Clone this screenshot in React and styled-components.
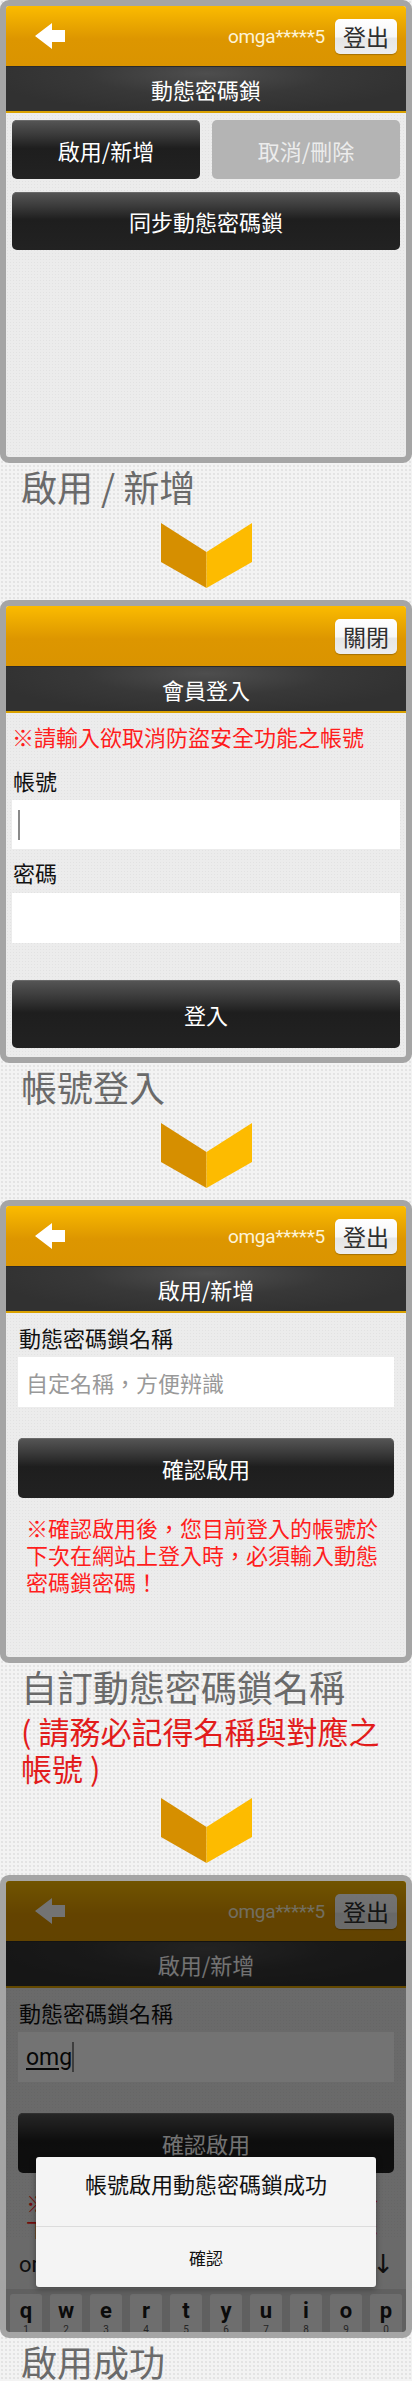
import React from "react";
import styled, { createGlobalStyle, css } from "styled-components";

const GlobalStyle = createGlobalStyle`
  body {
    margin: 0;
    background-color: #f3f3f3;
    background-image: radial-gradient(#e3e3e3 0.7px, transparent 1px);
    background-size: 4px 4px;
    font-family: "Noto Sans CJK TC", "Noto Sans", sans-serif;
  }
`;

const Page = styled.div`
  width: 412px;
  display: flex;
  flex-direction: column;
`;

const Frame = styled.section`
  position: relative;
  height: 463px;
  box-sizing: border-box;
  border: 6px solid #a5a5a5;
  border-radius: 9px;
  overflow: hidden;
  display: flex;
  flex-direction: column;
  background-color: #ececec;
  background-image: radial-gradient(#e2e2e2 0.6px, transparent 0.9px);
  background-size: 3px 3px;
`;

const TopBar = styled.header`
  height: 60px;
  flex-shrink: 0;
  display: flex;
  align-items: center;
  padding: 0 9px 0 29px;
  background: linear-gradient(#fbbb00 0%, #eaa700 30%, #dd9600 55%, #da9400 100%);
`;

const User = styled.span`
  margin-left: auto;
  margin-right: 10px;
  font-family: Roboto, "Noto Sans", sans-serif;
  font-size: 19px;
  letter-spacing: -0.3px;
  color: #fdf3d6;
`;

const HeadButton = styled.div`
  width: 62px;
  height: 35px;
  border-radius: 5px;
  display: flex;
  align-items: center;
  justify-content: center;
  font-size: 23px;
  color: #2f2f2f;
  background: linear-gradient(#ffffff 0%, #f7f7f7 50%, #e6e6e6 56%, #ededed 100%);
  box-shadow: 0 1px 1px rgba(0, 0, 0, 0.25);
  ${({ $push }) => $push && css`margin-left: auto;`}
`;

const TitleBar = styled.div`
  height: 44px;
  flex-shrink: 0;
  display: flex;
  align-items: center;
  justify-content: center;
  border-top: 1px solid #2a2a2a;
  border-bottom: 2px solid #d9a100;
  box-sizing: content-box;
  color: #fff;
  font-size: 22px;
  background: radial-gradient(ellipse 55% 90% at 50% 15%, #4e4e4e 0%, #383838 55%, #313131 100%);
`;

const MenuGrid = styled.div`
  display: grid;
  grid-template-columns: 1fr 1fr;
  column-gap: 12px;
  row-gap: 13px;
  padding: 7px 6px 0;
`;

const Button = styled.div`
  height: ${({ $h }) => $h}px;
  margin-top: ${({ $mt }) => $mt || 0}px;
  border-radius: 5px;
  display: flex;
  align-items: center;
  justify-content: center;
  font-size: 22px;
  grid-column: ${({ $wide }) => ($wide ? "1 / span 2" : "auto")};
  ${({ $muted }) =>
    $muted
      ? css`
          background: #b4b4b4;
          color: #ececec;
        `
      : css`
          color: #fff;
          background: linear-gradient(#565656 0%, #3a3a3a 25%, #1e1e1e 48%, #222 100%);
          box-shadow: inset 0 1px 0 #6a6a6a;
        `}
`;

const FormBody = styled.div`
  display: flex;
  flex-direction: column;
  padding: ${({ $pad }) => $pad};
`;

const Warning = styled.div`
  color: #ff1d1d;
  font-size: 22px;
  line-height: ${({ $lh }) => $lh || 30}px;
  margin-top: ${({ $mt }) => $mt || 0}px;
  padding-left: ${({ $pl }) => $pl || 0}px;
`;

const Label = styled.div`
  font-size: 22px;
  line-height: 30px;
  color: #111;
  margin-top: ${({ $mt }) => $mt || 0}px;
  margin-bottom: ${({ $mb }) => $mb || 5}px;
  padding-left: 1px;
`;

const Field = styled.div`
  height: ${({ $h }) => $h}px;
  background: #fff;
  display: flex;
  align-items: center;
  padding-left: 8px;
  font-size: 22px;
  color: #999;
`;

const Caret = styled.span`
  display: inline-block;
  width: 1.5px;
  height: 30px;
  background: #8a8a8a;
  margin-left: ${({ $ml }) => $ml || 0}px;
`;

const Typed = styled.span`
  font-family: Roboto, "Noto Sans", sans-serif;
  font-size: 23px;
  color: #111;
  text-decoration: underline;
  text-underline-offset: 3px;
`;

const Dim = styled.div`
  position: absolute;
  inset: 0;
  background: rgba(0, 0, 0, 0.55);
`;

const Keyboard = styled.div`
  position: absolute;
  left: 0;
  right: 0;
  bottom: 0;
  display: flex;
  flex-direction: column;
`;

const Suggest = styled.div`
  height: 50px;
  display: flex;
  align-items: center;
  justify-content: space-between;
  padding: 0 12px 0 13px;
  background: #eaeaea;
  font-family: Roboto, "Noto Sans", sans-serif;
  font-size: 22px;
  color: #222;
`;

const DownMark = styled.span`
  font-family: "DejaVu Sans", sans-serif;
  font-size: 26px;
  color: #222;
`;

const KeyRow = styled.div`
  height: 43px;
  display: flex;
  gap: 8px;
  padding: 5px 0 0 4px;
  box-sizing: border-box;
  background: #d6d6d6;
`;

const Key = styled.div`
  width: 32px;
  height: 48px;
  flex-shrink: 0;
  border-radius: 3px;
  background: #f4f4f4;
  display: flex;
  flex-direction: column;
  align-items: center;
  padding-top: 4px;
  box-sizing: border-box;
  font-family: Roboto, "Noto Sans", sans-serif;
  font-weight: 700;
  font-size: 22px;
  line-height: 26px;
  color: #1a1a1a;
  small {
    font-size: 10px;
    line-height: 12px;
    font-weight: 400;
    color: #555;
  }
`;

const Dialog = styled.div`
  position: absolute;
  left: 30px;
  top: 276px;
  width: 340px;
  height: 130px;
  border-radius: 3px;
  background: #f4f4f4;
  box-shadow: 0 2px 6px rgba(0, 0, 0, 0.35);
  display: flex;
  flex-direction: column;
`;

const DialogTitle = styled.div`
  height: 70px;
  display: flex;
  align-items: center;
  justify-content: center;
  padding-bottom: 18px;
  box-sizing: border-box;
  font-size: 22px;
  color: #111;
  border-bottom: 1px solid #dcdcdc;
`;

const DialogAction = styled.div`
  flex: 1;
  display: flex;
  align-items: center;
  justify-content: center;
  font-size: 17px;
  color: #111;
`;

const Caption = styled.div`
  padding: 3px 0 0 21px;
  display: flex;
  flex-direction: column;
`;

const CaptionTitle = styled.div`
  font-size: 36px;
  line-height: 40px;
  color: #6a6a6a;
`;

const Note = styled.div`
  margin-top: 6px;
  font-size: 31px;
  line-height: 37px;
  color: #e21c1c;
`;

const ArrowWrap = styled.div`
  display: flex;
  justify-content: center;
  margin: ${({ $top }) => $top ?? 17}px 0 12px;
`;

const BackArrow = () => (
  <svg width="30" height="26" viewBox="0 0 30 26">
    <polygon points="0,13 17,0 17,7 30,7 30,19 17,19 17,26" fill="#fff" />
  </svg>
);

const StepArrow = ({ top }) => (
  <ArrowWrap $top={top}>
    <svg width="91" height="65" viewBox="0 0 91 65">
      <polygon points="0,0 45.5,29 45.5,65 0,39" fill="#d68f00" />
      <polygon points="91,0 45.5,29 45.5,65 91,39" fill="#fdbb00" />
    </svg>
  </ArrowWrap>
);

const MemberBar = () => (
  <TopBar>
    <BackArrow />
    <User>omga*****5</User>
    <HeadButton>登出</HeadButton>
  </TopBar>
);

const NameForm = ({ typed }) => (
  <FormBody $pad="9px 12px 0">
    <Label>動態密碼鎖名稱</Label>
    <Field $h={50}>
      {typed ? (
        <>
          <Typed>omg</Typed>
          <Caret />
        </>
      ) : (
        "自定名稱，方便辨識"
      )}
    </Field>
    <Button $h={60} $mt={31}>確認啟用</Button>
    <Warning $lh={27} $mt={16} $pl={8}>
      ※確認啟用後，您目前登入的帳號於
      <br />
      下次在網站上登入時，必須輸入動態
      <br />
      密碼鎖密碼！
    </Warning>
  </FormBody>
);

const keys = ["q", "w", "e", "r", "t", "y", "u", "i", "o", "p"];

export default function App() {
  return (
    <Page>
      <GlobalStyle />

      <Frame>
        <MemberBar />
        <TitleBar>動態密碼鎖</TitleBar>
        <MenuGrid>
          <Button $h={59}>啟用/新增</Button>
          <Button $h={59} $muted>取消/刪除</Button>
          <Button $h={58} $wide>同步動態密碼鎖</Button>
        </MenuGrid>
      </Frame>
      <Caption>
        <CaptionTitle>啟用 / 新增</CaptionTitle>
      </Caption>
      <StepArrow />

      <Frame>
        <TopBar>
          <HeadButton $push>關閉</HeadButton>
        </TopBar>
        <TitleBar>會員登入</TitleBar>
        <FormBody $pad="8px 6px 0">
          <Warning>※請輸入欲取消防盜安全功能之帳號</Warning>
          <Label $mt={14}>帳號</Label>
          <Field $h={49}>
            <Caret $ml={-2} />
          </Field>
          <Label $mt={8} $mb={6}>密碼</Label>
          <Field $h={50} />
          <Button $h={68} $mt={37}>登入</Button>
        </FormBody>
      </Frame>
      <Caption>
        <CaptionTitle>帳號登入</CaptionTitle>
      </Caption>
      <StepArrow />

      <Frame>
        <MemberBar />
        <TitleBar>啟用/新增</TitleBar>
        <NameForm />
      </Frame>
      <Caption>
        <CaptionTitle>自訂動態密碼鎖名稱</CaptionTitle>
        <Note>
          ( 請務必記得名稱與對應之
          <br />
          帳號 )
        </Note>
      </Caption>
      <StepArrow top={12} />

      <Frame>
        <MemberBar />
        <TitleBar>啟用/新增</TitleBar>
        <NameForm typed />
        <Keyboard>
          <Suggest>
            <span>omg</span>
            <DownMark>↓</DownMark>
          </Suggest>
          <KeyRow>
            {keys.map((k, i) => (
              <Key key={k}>
                {k}
                <small>{(i + 1) % 10}</small>
              </Key>
            ))}
          </KeyRow>
        </Keyboard>
        <Dim />
        <Dialog>
          <DialogTitle>帳號啟用動態密碼鎖成功</DialogTitle>
          <DialogAction>確認</DialogAction>
        </Dialog>
      </Frame>
      <Caption>
        <CaptionTitle>啟用成功</CaptionTitle>
      </Caption>
    </Page>
  );
}
